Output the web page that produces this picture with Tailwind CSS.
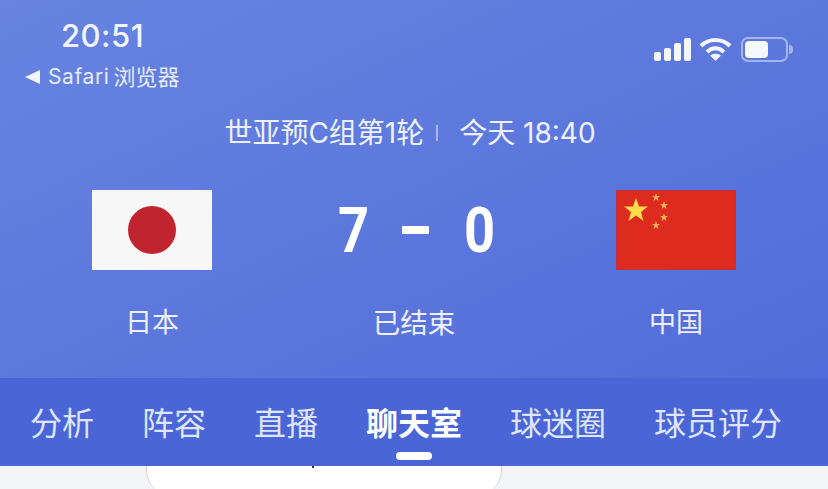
<!DOCTYPE html>
<html lang="zh">
<head>
    <meta charset="UTF-8" />
    <title>日本 7-0 中国</title>
    <script src="https://cdn.jsdelivr.net/npm/@tailwindcss/browser@4"></script>
</head>
<body class="m-0 bg-[#f3f5f7]">
    <div class="w-[828px] h-[489px] overflow-hidden flex flex-col text-white font-['Inter','Noto_Sans_CJK_SC',sans-serif]">

        <!-- Header -->
        <div class="h-[378px] shrink-0 bg-gradient-to-br from-[#6884e0] to-[#526cd9] flex flex-col">
            <!-- Status bar -->
            <div class="h-[100px] shrink-0 flex justify-between pl-[25px] pr-[35px]">
                <div class="flex flex-col">
                    <span class="pl-[36px] pt-[17px] text-[31px] leading-[38px] font-medium tracking-[0.5px] text-[#f2f5fe]">20:51</span>
                    <div class="flex items-center gap-[8px] mt-[7px] text-[#e6ebfb]">
                        <svg class="w-[15px] h-[14px]" viewBox="0 0 15 14"><path d="M0 7 15 0V14Z" fill="#f2f5fe" /></svg>
                        <span class="text-[21px] leading-[30px] tracking-[0.6px]">Safari</span>
                        <span class="text-[22px] leading-[30px] -ml-[4px]">浏览器</span>
                    </div>
                </div>
                <div class="flex items-start gap-[8px] pt-[37px]">
                    <svg class="w-[38px] h-[25px]" viewBox="0 0 38 25" fill="#f4f6fe">
                        <rect x="1" y="15" width="7" height="9" rx="2" />
                        <rect x="11" y="11" width="7" height="13" rx="2" />
                        <rect x="21" y="6" width="7" height="18" rx="2" />
                        <rect x="31" y="1" width="7" height="23" rx="2" />
                    </svg>
                    <svg class="w-[33px] h-[25px]" viewBox="0 0 33 25" fill="none" stroke="#f4f6fe" stroke-width="4">
                        <path d="M2 9C10 1 23 1 31 9" />
                        <path d="M8 15C13 10 20 10 25 15" />
                        <path d="M16.5 24 11 18.500C14 16 19 16 22 18.500Z" fill="#f4f6fe" stroke="none" />
                    </svg>
                    <div class="flex items-center ml-[1px]">
                        <div class="w-[47px] h-[25px] rounded-[7px] border-2 border-[#a3b4ef] p-[2px]">
                            <div class="w-[23px] h-full rounded-[4px] bg-[#f6f8ff]"></div>
                        </div>
                        <div class="w-[4px] h-[9px] ml-[1px] rounded-r-full bg-[#a3b4ef]"></div>
                    </div>
                </div>
            </div>

            <!-- Round info -->
            <div class="h-[64px] shrink-0 flex items-center justify-center gap-[12px] pt-[1px] text-[28px] text-[#eef1fd] mr-[8px]">
                <span>世亚预C组第1轮</span>
                <span class="w-[2px] h-[16px] bg-[#a6b6ef]"></span>
                <span class="ml-[9px]">今天 18:40</span>
            </div>

            <!-- Teams and score -->
            <div class="flex justify-between items-start pl-[92px] pr-[92px] pt-[26px]">
                <div class="w-[120px] flex flex-col items-center">
                    <div class="w-[120px] h-[80px] bg-[#f7f7f8] flex items-center justify-center">
                        <div class="w-[48px] h-[48px] rounded-full bg-[#c0242f]"></div>
                    </div>
                    <span class="mt-[33px] text-[27px] leading-[40px] text-[#eef1fd]">日本</span>
                </div>
                <div class="flex flex-col items-center">
                    <div class="h-[80px] flex items-center text-[63px] font-bold font-['Roboto',sans-serif] leading-none">
                        <span class="w-[30px] text-center scale-x-[0.86]">7</span>
                        <span class="w-[27px] h-[8px] ml-[36px] bg-white rounded-[1px]"></span>
                        <span class="w-[30px] ml-[33px] text-center scale-x-[0.86]">0</span>
                    </div>
                    <span class="mt-[33px] text-[27.500px] leading-[40px] text-[#eef1fd]">已结束</span>
                </div>
                <div class="w-[120px] flex flex-col items-center">
                    <svg class="w-[120px] h-[80px]" viewBox="0 0 120 80">
                        <rect width="120" height="80" fill="#dd2c1f" />
                        <rect x="0.500" y="0.500" width="119" height="79" fill="none" stroke="#b8324a" />
                        <polygon points="20,8 23,16.500 32,16.500 25,22 27.500,31 20,25.500 12.500,31 15,22 8,16.500 17,16.500" fill="#f8dc4a" />
                        <g transform="translate(0 -2)">
                            <polygon points="40,5 41,8 44,8 41.700,10 42.500,13 40,11.200 37.500,13 38.300,10 36,8 39,8" fill="#f2b050" />
                            <polygon points="48,13 49,16 52,16 49.700,18 50.500,21 48,19.200 45.500,21 46.300,18 44,16 47,16" fill="#f2b050" />
                            <polygon points="48,25 49,28 52,28 49.700,30 50.500,33 48,31.200 45.500,33 46.300,30 44,28 47,28" fill="#f2b050" />
                            <polygon points="40,33 41,36 44,36 41.700,38 42.500,41 40,39.200 37.500,41 38.300,38 36,36 39,36" fill="#f2b050" />
                        </g>
                    </svg>
                    <span class="mt-[33px] text-[27px] leading-[40px] text-[#eef1fd]">中国</span>
                </div>
            </div>
        </div>

        <!-- Tabs -->
        <div class="relative h-[88px] shrink-0 bg-[#4a66d6] flex items-center gap-[48px] pl-[30px] pt-[3px] text-[32px] text-[#dfe5fa]">
            <span>分析</span>
            <span>阵容</span>
            <span>直播</span>
            <span class="font-bold text-white">聊天室</span>
            <span>球迷圈</span>
            <span>球员评分</span>
            <div class="absolute left-[396px] top-[74px] w-[36px] h-[8px] rounded-full bg-white"></div>
        </div>

        <!-- Next card peeking in -->
        <div class="relative flex-1 pl-[146px]">
            <div class="w-[356px] h-[30px] bg-white rounded-b-[26px] border-x border-[#d4d6da]"></div>
            <div class="absolute left-[312px] top-0 w-[2px] h-[2px] bg-[#333]"></div>
        </div>
    </div>
</body>
</html>
